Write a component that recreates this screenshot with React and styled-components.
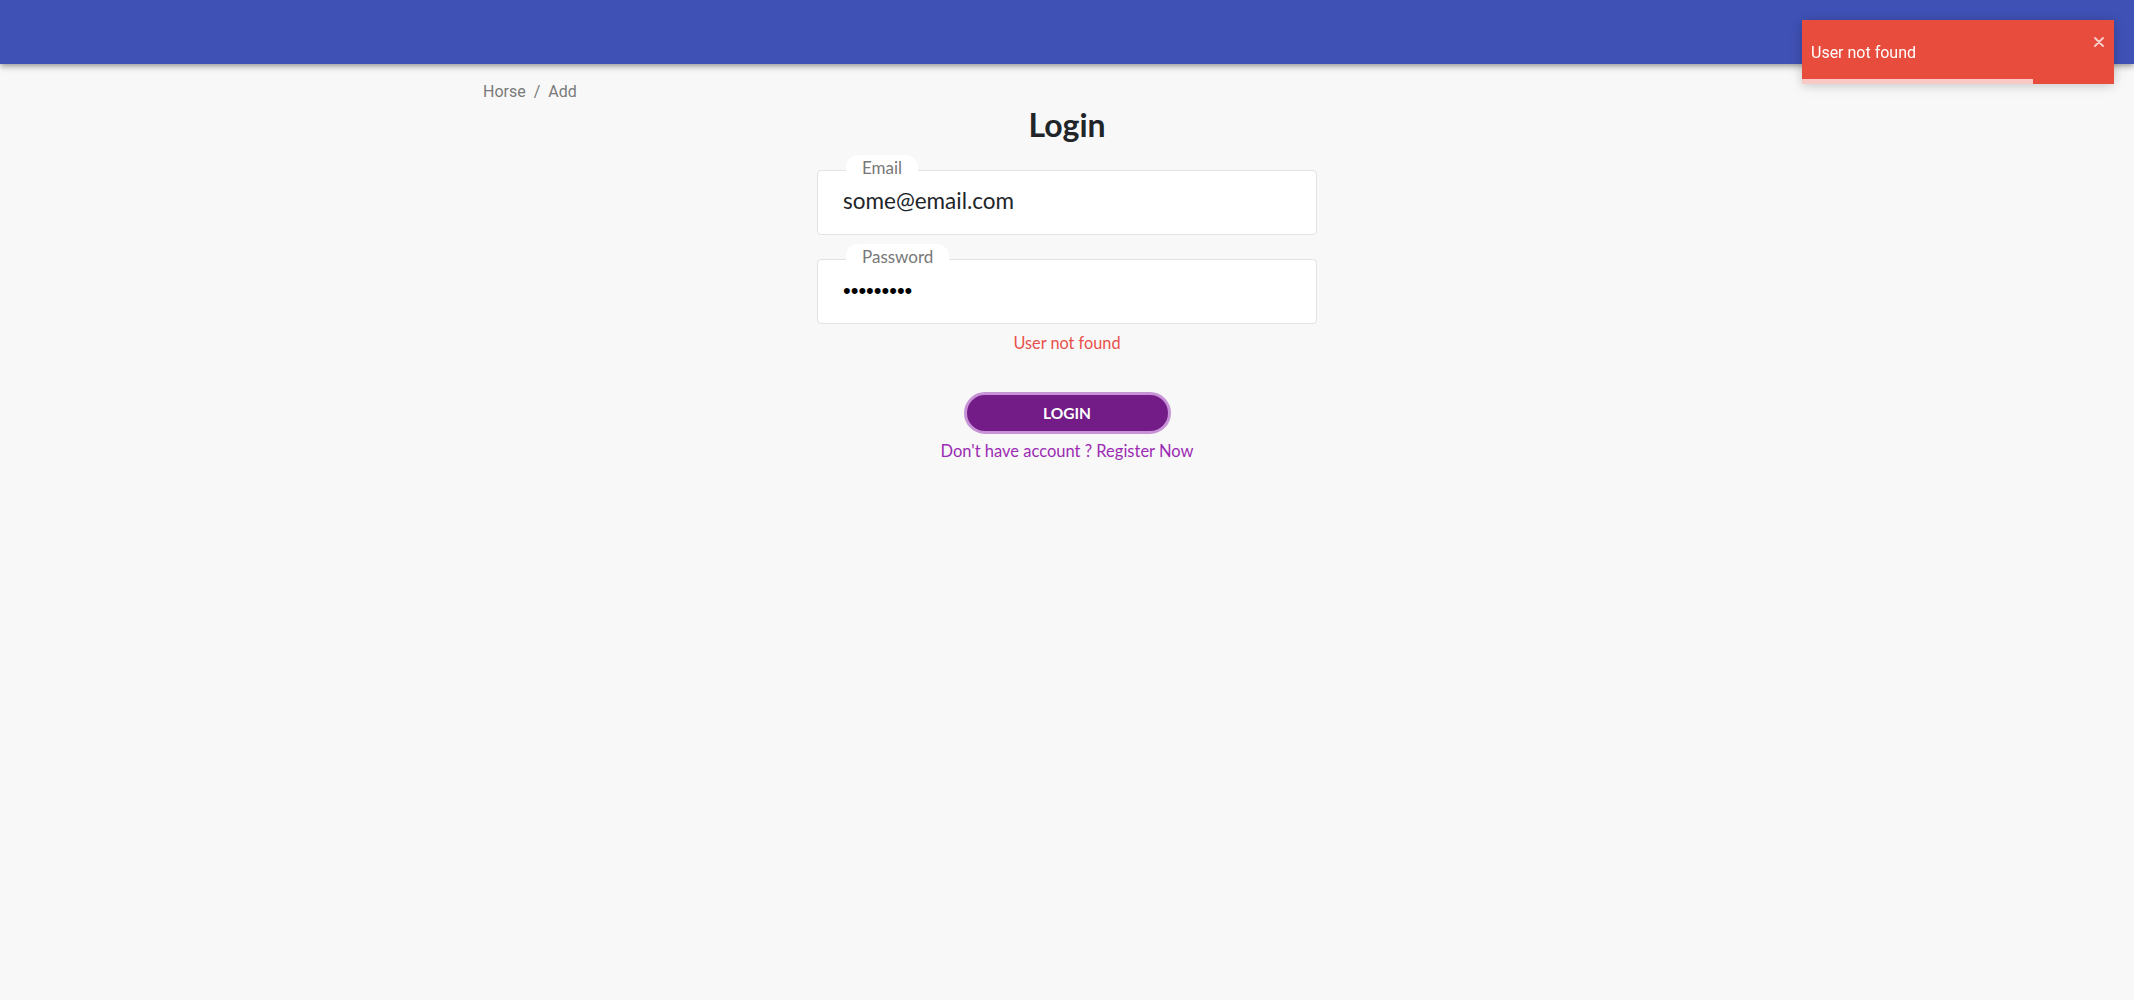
import React from "react";
import styled, { createGlobalStyle } from "styled-components";

const Global = createGlobalStyle`
  html, body { margin: 0; padding: 0; background: #f8f8f8; }
  body { font-family: Lato, "Noto Sans", sans-serif; color: #212529; }
  * { box-sizing: border-box; }
`;

const Header = styled.header`
  height: 64px;
  background: #3f51b5;
  box-shadow: 0 2px 4px -1px rgba(0,0,0,0.2), 0 4px 5px 0 rgba(0,0,0,0.14), 0 1px 10px 0 rgba(0,0,0,0.12);
`;

const Container = styled.main`
  width: 1168px;
  margin: 0 auto;
  padding-top: 18px;
`;

const Breadcrumb = styled.nav`
  display: flex;
  gap: 8px;
  font-family: Roboto, "Liberation Sans", sans-serif;
  font-size: 16px;
  line-height: 20px;
  color: #7a7a7a;
`;

const Title = styled.h1`
  margin: 3px 0 0;
  text-align: center;
  font-size: 32px;
  line-height: 40px;
  font-weight: 700;
  color: #212529;
`;

const Form = styled.form`
  width: 500px;
  margin: 0 auto;
  padding-top: 25px;
  display: flex;
  flex-direction: column;
`;

const Field = styled.div`
  position: relative;
  width: 100%;
  margin-top: ${(p) => p.$mt || 0}px;
`;

const Label = styled.label`
  position: absolute;
  top: -15px;
  left: 29px;
  background: #fff;
  padding: 2px 16px 0;
  border-radius: 12px 12px 0 0;
  font-size: 17px;
  line-height: 22px;
  color: #777;
`;

const Input = styled.input`
  display: block;
  width: 100%;
  height: 65px;
  border: 1px solid #e3e3e3;
  border-radius: 4px;
  background: #fff;
  padding: 0 24px 4px 25px;
  font-family: Lato, "Noto Sans", sans-serif;
  font-size: 22.5px;
  color: #212529;
  outline: none;

  &[type="password"] {
    font-family: "Liberation Sans", Arial, sans-serif;
    font-size: 22px;
    color: #000;
    padding: 0 24px 2px 25px;
  }
`;

const ErrorText = styled.div`
  text-align: center;
  margin-top: 7px;
  font-size: 16.3px;
  line-height: 24px;
  color: #e8504a;
`;

const Actions = styled.div`
  display: flex;
  flex-direction: column;
  align-items: center;
  margin-top: 37px;
`;

const LoginButton = styled.button`
  width: 207px;
  height: 42px;
  border-radius: 21px;
  border: 3px solid #c792d6;
  background: #731c87;
  color: #fff;
  font-family: Lato, "Noto Sans", sans-serif;
  font-weight: 700;
  font-size: 15.5px;
  cursor: pointer;
  padding: 0;
`;

const RegisterLink = styled.a`
  margin-top: 5px;
  font-size: 16.5px;
  line-height: 24px;
  color: #9c2bb3;
  text-decoration: none;
`;

const Toast = styled.div`
  position: fixed;
  top: 20px;
  right: 20px;
  width: 312px;
  height: 64px;
  background: #e74c3c;
  box-shadow: 0 1px 10px rgba(0,0,0,0.15), 0 2px 15px rgba(0,0,0,0.08);
  display: flex;
  align-items: center;
  padding: 0 9px;
  font-family: Roboto, "Liberation Sans", sans-serif;
  font-size: 16px;
  color: #fff;
`;

const Close = styled.svg`
  position: absolute;
  top: 17px;
  right: 10px;
  width: 10px;
  height: 10px;
  opacity: 0.75;
`;

const Progress = styled.div`
  position: absolute;
  left: 0;
  bottom: 0;
  height: 5px;
  background: rgba(255,255,255,0.7);
`;

export default function App() {
  return (
    <>
      <Global />
      <Header />
      <Container>
        <Breadcrumb>
          <span>Horse</span>
          <span>/</span>
          <span>Add</span>
        </Breadcrumb>
        <Title>Login</Title>
        <Form onSubmit={(e) => e.preventDefault()}>
          <Field>
            <Label>Email</Label>
            <Input type="text" defaultValue="some@email.com" />
          </Field>
          <Field $mt={24}>
            <Label>Password</Label>
            <Input type="password" defaultValue="123456789" />
          </Field>
          <ErrorText>User not found</ErrorText>
        </Form>
        <Actions>
          <LoginButton type="button">LOGIN</LoginButton>
          <RegisterLink href="#">Don't have account ? Register Now</RegisterLink>
        </Actions>
      </Container>
      <Toast>
        User not found
        <Close viewBox="0 0 10 10">
          <path d="M1 1 L9 9 M9 1 L1 9" stroke="#fff" strokeWidth="1.8" strokeLinecap="round" />
        </Close>
        <Progress style={{ width: "74%" }} />
      </Toast>
    </>
  );
}
